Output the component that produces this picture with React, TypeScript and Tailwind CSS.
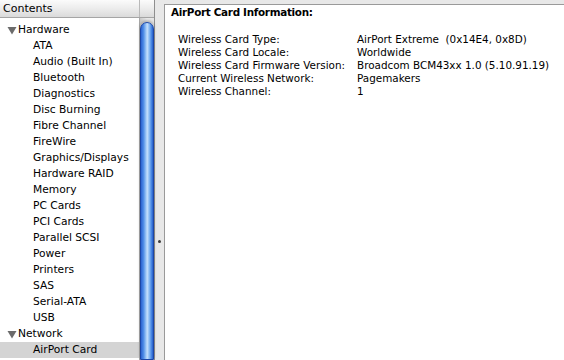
import React from "react";

const items = [
  "ATA",
  "Audio (Built In)",
  "Bluetooth",
  "Diagnostics",
  "Disc Burning",
  "Fibre Channel",
  "FireWire",
  "Graphics/Displays",
  "Hardware RAID",
  "Memory",
  "PC Cards",
  "PCI Cards",
  "Parallel SCSI",
  "Power",
  "Printers",
  "SAS",
  "Serial-ATA",
  "USB",
];

const info: [string, string][] = [
  ["Wireless Card Type:", "AirPort Extreme  (0x14E4, 0x8D)"],
  ["Wireless Card Locale:", "Worldwide"],
  ["Wireless Card Firmware Version:", "Broadcom BCM43xx 1.0 (5.10.91.19)"],
  ["Current Wireless Network:", "Pagemakers"],
  ["Wireless Channel:", "1"],
];

function Tri() {
  return (
    <svg width="10" height="9" viewBox="0 0 10 9" className="shrink-0">
      <polygon points="0.5,1 9.5,1 5,8.5" fill="#6b6b6b" />
    </svg>
  );
}

export default function App() {
  return (
    <div
      className="w-[564px] h-[360px] flex bg-[#e8e8e8] overflow-hidden text-black text-[10.7px] leading-none whitespace-pre"
      style={{ fontFamily: '"DejaVu Sans", "Lucida Grande", sans-serif' }}
    >
      {/* Left panel */}
      <div className="w-[155px] flex flex-col bg-white border-r border-[#8e8e8e] shrink-0">
        <div className="h-[18px] flex bg-gradient-to-b from-[#fbfbfb] via-[#ececec] to-[#dadada] border-b border-[#a5a5a5] shrink-0">
          <div className="w-[140px] border-r border-[#b9b9b9] pl-[3px] flex items-center text-[11px]">
            Contents
          </div>
          <div className="flex-1" />
        </div>
        <div className="flex-1 flex min-h-0">
          <div className="w-[140px] flex flex-col pt-[4px]">
            <div className="h-[16px] flex items-center pl-[7px] gap-[1px]">
              <Tri />
              <span>Hardware</span>
            </div>
            {items.map((t) => (
              <div key={t} className="h-[16px] flex items-center pl-[33px]">
                {t}
              </div>
            ))}
            <div className="h-[16px] flex items-center pl-[7px] gap-[1px]">
              <Tri />
              <span>Network</span>
            </div>
            <div className="h-[16px] flex items-center pl-[33px] bg-[#d4d4d4]">AirPort Card</div>
          </div>
          <div className="w-[15px] bg-gradient-to-r from-[#c8c8c8] via-[#f0f0f0] to-[#e4e4e4] border-l border-[#a8a8a8] pt-[4px] flex flex-col">
            <div className="flex-1 rounded-t-[7px] border border-[#1c47a8] bg-[linear-gradient(to_right,#2c63d0_0%,#4c8ae6_20%,#9cc6f6_42%,#c6e0fc_52%,#7eb2f0_72%,#3f7ee0_90%,#2a5fc8_100%)] shadow-[0_-2px_3px_rgba(0,0,0,0.25)]" />
          </div>
        </div>
      </div>

      {/* Splitter */}
      <div className="w-[9px] shrink-0 flex items-center justify-center">
        <div className="w-[3px] h-[3px] rounded-full bg-[#3a3a3a] mt-[122px]" />
      </div>

      {/* Right panel */}
      <div className="flex-1 mt-[4px] bg-white border-l border-t border-[#9a9a9a] pl-[6px] text-[10.4px]">
        <div className="font-bold h-[14px] flex items-center text-[10.4px] tracking-[-0.3px]">
          AirPort Card Information:
        </div>
        <div className="flex pt-[14px] pl-[7px]">
          <div className="w-[179px] flex flex-col">
            {info.map(([k]) => (
              <div key={k} className="h-[13px] flex items-center">
                {k}
              </div>
            ))}
          </div>
          <div className="flex flex-col">
            {info.map(([k, v]) => (
              <div key={k} className="h-[13px] flex items-center">
                {v}
              </div>
            ))}
          </div>
        </div>
      </div>
    </div>
  );
}
